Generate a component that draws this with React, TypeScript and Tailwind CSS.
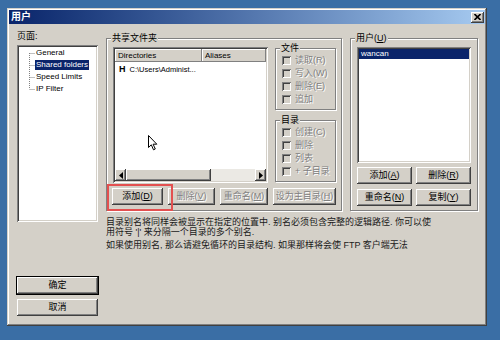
import type { ReactNode } from "react";

const font = "font-['Liberation_Sans','Noto_Sans_CJK_SC',sans-serif]";
const raised =
  "bg-[#d4d0c8] shadow-[inset_-1px_-1px_#404040,inset_1px_1px_#ffffff,inset_-2px_-2px_#808080,inset_2px_2px_#d4d0c8]";
const sunken =
  "p-[2px] shadow-[inset_1px_1px_#808080,inset_-1px_-1px_#ffffff,inset_2px_2px_#404040,inset_-2px_-2px_#d4d0c8]";
const etched = "border border-[#808080] shadow-[1px_1px_0_#ffffff,inset_1px_1px_0_#ffffff]";
const grayText = "text-[#808080] [text-shadow:1px_1px_0_#ffffff]";

interface BtnProps {
  children: ReactNode;
  className?: string;
  disabled?: boolean;
  isDefault?: boolean;
}

const Btn = ({ children, className, disabled, isDefault }: BtnProps) => (
  <div
    className={`${className} h-[17px] flex items-center justify-center text-[9px] leading-none ${raised} ${
      disabled ? grayText : "text-black"
    } ${isDefault ? "outline outline-1 outline-black" : ""}`}
  >
    {children}
  </div>
);

const Mn = ({ c }: { c: string }) => <span className="underline">{c}</span>;

const Group = ({ label, className, children }: { label: ReactNode; className: string; children: ReactNode }) => (
  <div className={`${etched} flex flex-col ${className}`}>
    <div className="-mt-[6px] ml-[4px] w-fit bg-[#d4d0c8] px-[1px] h-[11px] leading-[11px] text-[9px] text-black">
      {label}
    </div>
    {children}
  </div>
);

const Check = ({ label }: { label: string }) => (
  <div className="h-[13px] flex items-center pl-[6px]">
    <div className="w-[9px] h-[9px] bg-[#d4d0c8] shadow-[inset_1px_1px_#808080,inset_-1px_-1px_#ffffff,inset_2px_2px_#404040]" />
    <span className={`ml-[4px] text-[9px] leading-none ${grayText}`}>{label}</span>
  </div>
);

const Arrow = ({ dir }: { dir: "l" | "r" }) => (
  <div className={`w-[11px] h-full flex items-center justify-center ${raised}`}>
    <svg width="4" height="7" viewBox="0 0 4 7">
      {dir === "l" ? <path d="M4 0 L0 3.5 L4 7 Z" fill="#000" /> : <path d="M0 0 L4 3.5 L0 7 Z" fill="#000" />}
    </svg>
  </div>
);

export default function App() {
  return (
    <div className={`relative w-[500px] h-[340px] bg-[#3a6ea5] overflow-hidden pt-[8px] pl-[7px] ${font}`}>
      <div className="w-[480px] h-[318px] bg-[#d4d0c8] p-[2px] flex flex-col shadow-[inset_-1px_-1px_#404040,inset_1px_1px_#d4d0c8,inset_-2px_-2px_#808080,inset_2px_2px_#ffffff]">
        {/* title bar */}
        <div className="h-[14px] flex items-center bg-linear-to-r from-[#0a246a] to-[#a6caf0]">
          <span className="ml-[2px] text-[10px] font-bold text-white leading-none">用户</span>
          <div className={`ml-auto mr-[1px] w-[13px] h-[11px] flex items-center justify-center ${raised}`}>
            <svg width="7" height="6" viewBox="0 0 7 6">
              <path d="M0.5 0 L6.5 6 M6.5 0 L0.5 6" stroke="#000" strokeWidth="1.6" />
            </svg>
          </div>
        </div>

        {/* body */}
        <div className="flex flex-1">
          {/* left column */}
          <div className="pl-[8px] pt-[7px] w-[89px] flex flex-col">
            <div className="h-[11px] leading-[11px] text-[9px] text-black">页面:</div>
            <div className={`mt-[3px] h-[177px] w-[81px] bg-white ${sunken}`}>
              <div className="flex">
                <svg width="16" height="48" className="shrink-0">
                  <g stroke="#808080" strokeDasharray="1 1" strokeWidth="1">
                    <path d="M10.5 6 V42" />
                    <path d="M10.5 6.5 H16 M10.5 18.5 H16 M10.5 30.5 H16 M10.5 42.5 H16" />
                  </g>
                </svg>
                <div className="flex flex-col text-[8px] leading-[12px] text-black">
                  <div className="h-[12px]"><span className="px-[1px]">General</span></div>
                  <div className="h-[12px] flex items-center">
                    <span className="px-[1px] h-[10px] leading-[10px] bg-[#0a246a] text-white">Shared folders</span>
                  </div>
                  <div className="h-[12px]"><span className="px-[1px]">Speed Limits</span></div>
                  <div className="h-[12px]"><span className="px-[1px]">IP Filter</span></div>
                </div>
              </div>
            </div>
            <Btn className="mt-[55px] w-[81px]" isDefault>确定</Btn>
            <Btn className="mt-[5px] w-[81px]">取消</Btn>
          </div>

          {/* right area */}
          <div className="ml-[8px] pt-[14px] flex flex-col w-[372px]">
            <div className="flex gap-[8px]">
              {/* shared folders */}
              <Group label="共享文件夹" className="w-[236px] h-[173px]">
                <div className="flex pl-[6px] mt-[3px]">
                  <div className={`w-[155px] h-[136px] bg-white flex flex-col ${sunken}`}>
                    <div className="flex h-[13px] text-[8px] leading-none text-black">
                      <div className="w-[87px] flex items-center pl-[3px] bg-[#d4d0c8] shadow-[inset_-1px_-1px_#808080,inset_1px_1px_#ffffff]">
                        Directories
                      </div>
                      <div className="flex-1 flex items-center pl-[3px] bg-[#d4d0c8] shadow-[inset_-1px_-1px_#808080,inset_1px_1px_#ffffff]">
                        Aliases
                      </div>
                    </div>
                    <div className="flex items-center h-[11px] mt-[2px] pl-[4px] text-black">
                      <span className="text-[9px] font-bold leading-none">H</span>
                      <span className="ml-[4px] text-[7.5px] leading-none">C:\Users\Administ...</span>
                    </div>
                    <div className="flex-1" />
                    <div className="h-[12px] flex">
                      <Arrow dir="l" />
                      <div className={`w-[85px] ${raised}`} />
                      <div className="flex-1 bg-[#ebe9e4]" />
                      <Arrow dir="r" />
                    </div>
                  </div>
                  <div className="ml-[7px] flex flex-col">
                    <Group label="文件" className="mt-[1px] w-[61px] h-[62px]">
                      <Check label="读取(R)" />
                      <Check label="写入(W)" />
                      <Check label="删除(E)" />
                      <Check label="追加" />
                    </Group>
                    <Group label="目录" className="mt-[10px] w-[61px] h-[62px]">
                      <Check label="创建(C)" />
                      <Check label="删除" />
                      <Check label="列表" />
                      <Check label="+ 子目录" />
                    </Group>
                  </div>
                </div>
                <div className="flex gap-[5px] pl-[5px] mt-[5px]">
                  <Btn className="w-[51px]">
                    添加(<Mn c="D" />)
                  </Btn>
                  <Btn className="w-[47px]" disabled>
                    删除(<Mn c="V" />)
                  </Btn>
                  <Btn className="w-[48px]" disabled>
                    重命名(<Mn c="M" />)
                  </Btn>
                  <Btn className="w-[63px]" disabled>
                    设为主目录(<Mn c="H" />)
                  </Btn>
                </div>
              </Group>

              {/* users */}
              <Group
                label={
                  <>
                    用户(<Mn c="U" />)
                  </>
                }
                className="w-[128px] h-[173px]"
              >
                <div className="pl-[6px] mt-[3px] flex flex-col">
                  <div className={`w-[114px] h-[116px] bg-white ${sunken}`}>
                    <div className="h-[10px] bg-[#0a246a] text-white text-[8px] leading-[10px] pl-[2px]">wancan</div>
                  </div>
                  <div className="flex gap-[4px] mt-[4px]">
                    <Btn className="w-[55px]">
                      添加(<Mn c="A" />)
                    </Btn>
                    <Btn className="w-[55px]">
                      删除(<Mn c="R" />)
                    </Btn>
                  </div>
                  <div className="flex gap-[4px] mt-[5px]">
                    <Btn className="w-[55px]">
                      重命名(<Mn c="N" />)
                    </Btn>
                    <Btn className="w-[55px]">
                      复制(<Mn c="Y" />)
                    </Btn>
                  </div>
                </div>
              </Group>
            </div>

            <div className="mt-[6px] text-[9px] leading-[10px] text-[#1a1a1a] whitespace-nowrap">
              <div>目录别名将同样会被显示在指定的位置中. 别名必须包含完整的逻辑路径. 你可以使</div>
              <div>用符号 '|' 来分隔一个目录的多个别名.</div>
              <div className="mt-[3px]">如果使用别名, 那么请避免循环的目录结构. 如果那样将会使 FTP 客户端无法</div>
            </div>
          </div>
        </div>
      </div>

      {/* annotation + mouse pointer over the dialog */}
      <div className="absolute left-[107px] top-[184px] w-[66px] h-[27px] border-2 border-[#e35050]" />
      <svg className="absolute left-[148px] top-[135px]" width="10" height="16" viewBox="0 0 10 16">
        <path d="M0.5 0.5 L0.5 12.5 L3.3 9.8 L5.5 14.8 L7.3 14 L5.1 9.2 L8.8 9.2 Z" fill="#fff" stroke="#000" strokeWidth="1" />
      </svg>
    </div>
  );
}
